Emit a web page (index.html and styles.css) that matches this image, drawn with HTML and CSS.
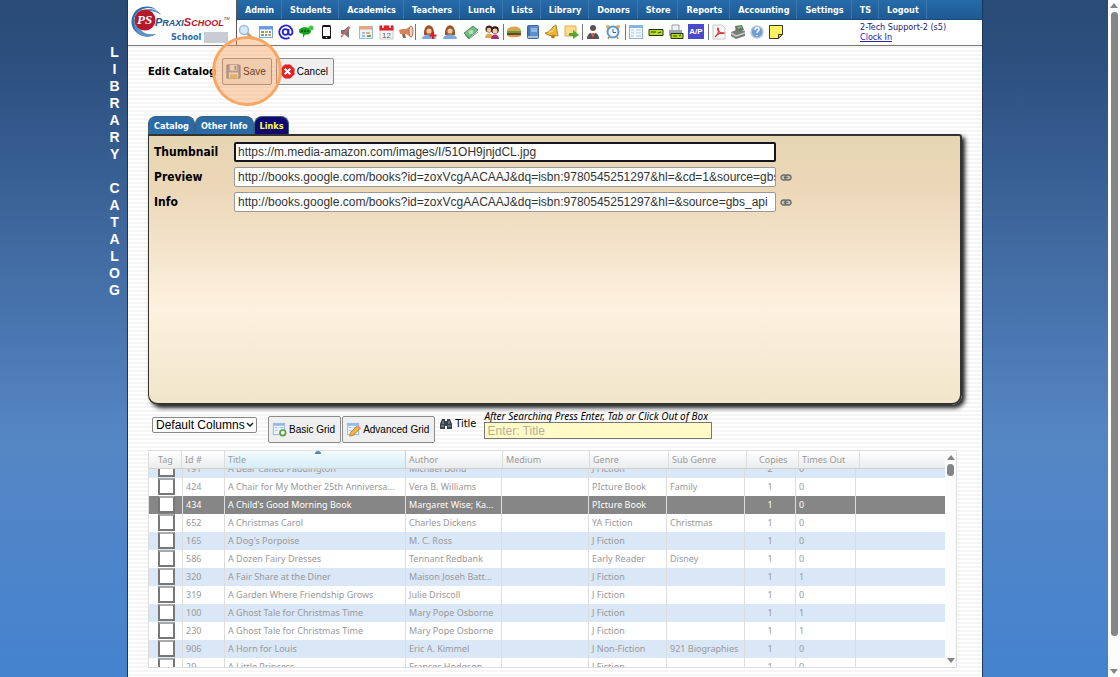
FILE: index.html
```html
<!DOCTYPE html>
<html lang="en">
  <head>
    <meta charset="UTF-8" />
    <meta name="viewport" content="width=device-width, initial-scale=1.0" />
    <title>PraxiSchool - Library Catalog</title>
    <link rel="stylesheet" href="styles.css">
  </head>
  <body>
    <div class="side-title">L
I
B
R
A
R
Y

C
A
T
A
L
O
G</div>

    <div class="page">
      <header class="header">
        <div class="logo">
          <svg class="logo-mark" viewBox="0 0 34 34">
            <path d="M27 5C19-1 7 1 3 10s0 18 10 21c5 1 10 0 13-2-8 2-16 0-20-7S5 7 13 4c5-2 10-1 14 1z" fill="#2a6fae" />
            <path d="M31 10C27 3 16 2 9 8S3 24 9 29c6 4 13 3 17 0-6 1-12 0-16-5S7 12 13 8c6-3 13-2 18 2z" fill="#5b93c6" />
            <circle cx="15" cy="15" r="10.500" fill="#b5172b" />
            <text x="7" y="19" class="mark-ps">PS</text>
          </svg>
          <div class="logo-text">
            <div class="brand"><span class="blue">P<small>RAXI</small></span><span class="red">S<small>CHOOL</small></span><sup>TM</sup></div>
            <div class="school">School <span class="school-name"></span></div>
          </div>
        </div>
        <div class="header-main">
          <nav class="nav">
            <a href="#">Admin</a><a href="#">Students</a><a href="#">Academics</a><a href="#">Teachers</a><a href="#">Lunch</a><a href="#">Lists</a><a href="#">Library</a><a href="#">Donors</a><a href="#">Store</a><a href="#">Reports</a><a href="#">Accounting</a><a href="#">Settings</a><a href="#">TS</a><a href="#">Logout</a>
          </nav>
          <div class="toolbar">
            <div class="tools">
              <a href="#" title="Search"><svg viewBox="0 0 16 16"><path d="M9 9l5 5" stroke="#c9a578" stroke-width="3" stroke-linecap="round" /><circle cx="6" cy="6" r="4.500" fill="#d5e9fb" stroke="#9bbbe0" stroke-width="1.500" /></svg></a>
              <a href="#" title="Schedule"><svg viewBox="0 0 16 16"><rect x="1.500" y="2.500" width="13" height="11" fill="#fff" stroke="#7aa7dc" /><path d="M1 4h14" stroke="#6a9ddb" stroke-width="3" /><path d="M3 8h3M3 11h3" stroke="#6fae58" stroke-width="2" /><path d="M7 8h3M10 11h3" stroke="#e79a4c" stroke-width="2" /><path d="M11 8h2M7 11h2" stroke="#5b97df" stroke-width="2" /></svg></a>
              <a href="#" title="Email"><svg viewBox="0 0 16 16"><g fill="none" stroke="#2424cf" stroke-width="1.800"><circle cx="7.500" cy="8" r="2.800" /><path d="M10.500 5v4.500c0 2 4 2 4-1.500a6.600 6.600 0 1 0-3 5.600" /></g></svg></a>
              <a href="#" title="Text message"><svg viewBox="0 0 16 16"><path d="M1 7c0-5 12-5 12 0 0 3-4 4-6 3.500L5 14v-4C2 9.500 1 9 1 7z" fill="#12a41c" /><circle cx="13" cy="4" r="2.500" fill="#46c14d" /><path d="M3 7h8" stroke="#034b08" stroke-width="1.500" stroke-dasharray="2 1" /></svg></a>
              <a href="#" title="Phone"><svg viewBox="0 0 16 16"><rect x="4" y="1" width="9" height="14" rx="1.500" fill="#151515" /><path d="M5 3h7v9H5z" fill="#fff" /><circle cx="8.500" cy="13.500" r=".8" fill="#fff" /></svg></a>
              <a href="#" title="Mute"><svg viewBox="0 0 16 16"><path d="M3 6h3l5-4v12l-5-4H3z" fill="#777" /><path d="M3 13l9-10" stroke="#dd6565" stroke-width="1.500" /></svg></a>
              <a href="#" title="Planner"><svg viewBox="0 0 16 16"><rect x="1.500" y="2.500" width="13" height="12" fill="#eaf3fc" stroke="#9fb8d6" /><path d="M2 4h12" stroke="#f2a36d" stroke-width="3" /><path d="M4 8h3v2H4zM4 11h3v2H4z" fill="#9bc3ea" /><path d="M8 8h4v2H8z" fill="#f4a560" /><path d="M9 11h4v2H9z" fill="#6da85a" /></svg></a>
              <a href="#" title="Calendar"><svg viewBox="0 0 16 16"><rect x="2" y="2" width="13" height="13" fill="#f2f2f2" stroke="#ccc" /><path d="M1.500 1.500h14v5h-14z" fill="#d9222c" /><path d="M5 0v4M12 0v4" stroke="#fff" stroke-width="1.500" /><text x="4" y="14" class="icon-num">12</text></svg></a>
              <a href="#" title="Announcements"><svg viewBox="0 0 16 16"><path d="M1 6l3-1h4l5-3v11L8 10H2z" fill="#d98655" /><path d="M4 10h3l1 4H5z" fill="#8c6655" /><ellipse cx="13" cy="7.500" rx="2" ry="5.500" fill="#e5d3c8" stroke="#b36b4a" /></svg></a>
            </div>
            <div class="tools people">
              <a href="#" title="Add student"><svg viewBox="0 0 16 16"><path d="M3 11c-1-13 11-13 10 0z" fill="#9b5326" /><circle cx="8" cy="7" r="2.600" fill="#f4c69d" /><path d="M1 15c0-6 14-6 14 0z" fill="#79a9df" /><path d="M12 8v7M8.500 11.500h7" stroke="#e5171c" stroke-width="2" /></svg></a>
              <a href="#" title="Student"><svg viewBox="0 0 16 16"><path d="M3 11c-1-13 11-13 10 0z" fill="#9b5326" /><circle cx="8" cy="7" r="2.600" fill="#f4c69d" /><path d="M1 15c0-6 14-6 14 0z" fill="#79a9df" /></svg></a>
              <a href="#" title="Payments"><svg viewBox="0 0 16 16"><path d="M1 9l9-7 5 4-9 8z" fill="#79b986" stroke="#4d965e" /><ellipse cx="8" cy="8" rx="2.500" ry="2" fill="#b9dfbf" /><path d="M2 11l4 4 9-7" fill="none" stroke="#68a977" /></svg></a>
              <a href="#" title="Families"><svg viewBox="0 0 16 16"><circle cx="5" cy="5" r="3.500" fill="#362a24" /><circle cx="5" cy="6" r="2.300" fill="#f0c29b" /><path d="M1 14c0-6 8-6 8 0z" fill="#d9a94e" /><circle cx="11" cy="6" r="3.800" fill="#2a1b18" /><circle cx="11" cy="7" r="2.500" fill="#f6cba5" /><path d="M7 15c0-6 8-6 8 0z" fill="#a92a72" /></svg></a>
            </div>
            <div class="tools">
              <a href="#" title="Lunch"><svg viewBox="0 0 16 16"><path d="M1 7c0-6 14-6 14 0z" fill="#dda24e" /><path d="M1 8h14" stroke="#58a13b" stroke-width="2" /><path d="M1 10h14" stroke="#71402b" stroke-width="2" /><path d="M1 11h14c0 3-14 3-14 0z" fill="#d99a47" /></svg></a>
              <a href="#" title="Library"><svg viewBox="0 0 16 16"><rect x="2.500" y="1.500" width="11" height="13" rx="1" fill="#5d8fcb" stroke="#3c659c" /><path d="M4 2v10" stroke="#315d94" /><path d="M6 5h6M6 7h6" stroke="#c8def5" /><path d="M3 13h10" stroke="#eee" /></svg></a>
              <a href="#" title="Alerts"><svg viewBox="0 0 16 16"><path d="M1 9c6-1 6-6 11-8l2 11c-3-1-9 1-13-3z" fill="#e9b63a" stroke="#b98119" /><circle cx="9" cy="12.500" r="2" fill="#be7f17" /><path d="M5 8c4 0 5-3 6-5" stroke="#fff1a9" fill="none" /></svg></a>
              <a href="#" title="Send note"><svg viewBox="0 0 16 16"><path d="M2 2h11v10H2z" fill="#fbdc8f" stroke="#e3aa4c" /><path d="M6 9h4V6l6 5-6 4v-3H6z" fill="#55a72f" /></svg></a>
            </div>
            <div class="tools staff">
              <a href="#" title="Staff"><svg viewBox="0 0 16 16"><circle cx="8" cy="4" r="3" fill="#5c5250" /><path d="M2 15c0-9 12-9 12 0z" fill="#505057" /><path d="M6 8h4l-2 6z" fill="#fff" /><path d="M8 9v5" stroke="#d22" stroke-width="1.500" /></svg></a>
              <a href="#" title="Time clock"><svg viewBox="0 0 16 16"><circle cx="3" cy="3" r="2" fill="#e3ad42" /><circle cx="13" cy="3" r="2" fill="#e3ad42" /><circle cx="8" cy="8" r="5.500" fill="#f3f8ff" stroke="#5b96d5" stroke-width="2" /><path d="M8 5v3.500h3" fill="none" stroke="#445a77" /><path d="M4 13l-1 2M12 13l1 2" stroke="#b88429" stroke-width="1.500" /></svg></a>
            </div>
            <div class="tools wide">
              <a href="#" title="Ledger"><svg viewBox="0 0 16 16"><rect x="1.500" y="1.500" width="13" height="13" fill="#f2f8ff" stroke="#8eb5dd" /><path d="M2 3h12" stroke="#83b1e3" stroke-width="2" /><path d="M3 6h3M3 9h3M3 12h3M8 6h5M8 9h5M8 12h5" stroke="#acc8e4" /></svg></a>
              <a href="#" title="Check"><svg viewBox="0 0 16 16"><path d="M1 5.500h14v6H1z" fill="#b4d832" stroke="#26320b" /><path d="M3 8h5M10 9l3-1" stroke="#314706" /></svg></a>
              <a href="#" title="Print checks"><svg viewBox="0 0 16 16"><path d="M4 1h7v6H4z" fill="#eef2f5" stroke="#99a" /><path d="M1 6h13v6H1z" fill="#9da5aa" /><path d="M3 9.500h12v5H3z" fill="#b4d832" stroke="#26320b" /><path d="M5 12h4M11 12l2-1" stroke="#314706" /></svg></a>
              <a href="#" title="Accounts payable" class="ap">A/P</a>
            </div>
            <div class="tools last">
              <a href="#" title="PDF"><svg viewBox="0 0 16 16"><path d="M2 1h9l3 3v11H2z" fill="#f7f7f7" stroke="#c8c8c8" /><path d="M4 13c4-3 4-7 3-9-2 1 3 7 6 5-2-1-7 1-9 4z" fill="none" stroke="#dc3939" stroke-width="1.300" /></svg></a>
              <a href="#" title="Cash register"><svg viewBox="0 0 16 16"><path d="M5 2l7-1 2 5-8 3z" fill="#667064" /><path d="M7 3l4-1 1 2-4 1z" fill="#75bf68" /><path d="M1 8l5-2 9 1v5l-9 3-5-3z" fill="#777d77" /><path d="M1 9l5 3 9-3" fill="none" stroke="#c8cdc8" stroke-width="1.500" /></svg></a>
              <a href="#" title="Help"><svg viewBox="0 0 16 16"><circle cx="8" cy="8" r="6" fill="#6d9fd6" stroke="#b9c9d9" stroke-width="1.500" /><path d="M6 6c0-3 4-3 4-.5C10 7 8 7 8 9M8 11v1" fill="none" stroke="#fff" stroke-width="1.500" /></svg></a>
              <a href="#" title="Notes"><svg viewBox="0 0 16 16"><path d="M1.500 1.500h13v9l-4 4h-9z" fill="#fff064" stroke="#3c3a1f" /><path d="M14.500 10.500h-4v4z" fill="#d8c73b" stroke="#3c3a1f" /></svg></a>
            </div>
            <div class="user">2-Tech Support-2 (s5)<br><a href="#">Clock In</a></div>
          </div>
        </div>
      </header>

      <main class="content">
        <div class="title-row">
          <h1>Edit Catalog</h1>
          <div class="save-wrap">
            <button type="button" class="btn"><svg viewBox="0 0 16 16"><path d="M1 1h13l1 1v13H1z" fill="#8d9cb6" stroke="#62708c" /><path d="M4 1h8v6H4z" fill="#e8edf4" /><path d="M9 2h2v4H9z" fill="#77859b" /><path d="M3 9h10v6H3z" fill="#eee" /><path d="M4 11h8v4H4z" fill="#c9c777" /></svg>Save</button>
            <span class="click-mark"></span>
          </div>
          <button type="button" class="btn"><svg viewBox="0 0 16 16"><path d="M5 1h6l4 4v6l-4 4H5l-4-4V5z" fill="#e32227" stroke="#d6292c" /><path d="M5 5l6 6M11 5l-6 6" stroke="#fff" stroke-width="2.200" /></svg>Cancel</button>
        </div>

        <div class="tabs">
          <button type="button">Catalog</button>
          <button type="button">Other Info</button>
          <button type="button" class="active">Links</button>
        </div>
        <form class="panel">
          <div class="field">
            <label for="thumbnail">Thumbnail</label>
            <input type="text" id="thumbnail" class="focused" value="https://m.media-amazon.com/images/I/51OH9jnjdCL.jpg">
          </div>
          <div class="field">
            <label for="preview">Preview</label>
            <input type="text" id="preview" value="http://books.google.com/books?id=zoxVcgAACAAJ&amp;dq=isbn:9780545251297&amp;hl=&amp;cd=1&amp;source=gbs_api">
            <a href="#" title="Open preview"><svg viewBox="0 0 12 7"><g fill="#c8c4b6" stroke="#696a69" stroke-width="1.300"><rect x="1" y="1" width="6" height="5" rx="2.500" /><rect x="5" y="1" width="6" height="5" rx="2.500" /><path d="M4 3.500h4" /></g></svg></a>
          </div>
          <div class="field">
            <label for="info">Info</label>
            <input type="text" id="info" value="http://books.google.com/books?id=zoxVcgAACAAJ&amp;dq=isbn:9780545251297&amp;hl=&amp;source=gbs_api">
            <a href="#" title="Open info"><svg viewBox="0 0 12 7"><g fill="#c8c4b6" stroke="#696a69" stroke-width="1.300"><rect x="1" y="1" width="6" height="5" rx="2.500" /><rect x="5" y="1" width="6" height="5" rx="2.500" /><path d="M4 3.500h4" /></g></svg></a>
          </div>
        </form>

        <div class="controls">
          <div class="select-wrap">
            <select aria-label="Columns"><option>Default Columns</option></select>
            <svg viewBox="0 0 8 5"><path d="M1 1l3 3 3-3" fill="none" stroke="#222" stroke-width="1.500" /></svg>
          </div>
          <button type="button" class="btn"><svg viewBox="0 0 16 16"><rect x="1.500" y="1.500" width="12" height="12" fill="#eff6ff" stroke="#90b5df" /><path d="M2 3h11" stroke="#8fb9e9" stroke-width="2" /><path d="M3 6h3M3 9h3M8 6h4M8 9h4" stroke="#9bbbe0" /><circle cx="11.500" cy="11.500" r="3" fill="#f1fce9" stroke="#5c9f3f" stroke-width="1.800" /></svg>Basic Grid</button>
          <button type="button" class="btn"><svg viewBox="0 0 16 16"><rect x="1.500" y="1.500" width="12" height="12" fill="#eff6ff" stroke="#90b5df" /><path d="M2 3h11" stroke="#8fb9e9" stroke-width="2" /><path d="M3 6h3M3 9h3M8 6h4" stroke="#9bbbe0" /><path d="M4 15l1-4 7-7 3 3-7 7z" fill="#efb64a" stroke="#bd7d2c" /><path d="M12 4l3 3" stroke="#e88" stroke-width="2" /></svg>Advanced Grid</button>
          <label class="search-label" for="search"><svg viewBox="0 0 12 12"><path d="M2 1h3v2h2V1h3l2 5v5H7V8H5v3H0V6z" fill="#39434c" /><path d="M1 8h3M8 8h3M3 3v3M9 3v3" stroke="#94a6b3" /></svg>Title</label>
          <div class="search">
            <em>After Searching Press Enter, Tab or Click Out of Box</em>
            <input type="text" id="search" placeholder="Enter: Title">
          </div>
        </div>

        <div class="grid">
          <table>
            <thead>
              <tr><th>Tag</th><th>Id #</th><th class="sorted">Title</th><th>Author</th><th>Medium</th><th>Genre</th><th>Sub Genre</th><th>Copies</th><th>Times Out</th><th></th></tr>
            </thead>
            <tbody>
              <tr><td><input type="checkbox" aria-label="Tag 191"></td><td>191</td><td>A Bear Called Paddington</td><td>Michael Bond</td><td></td><td>J Fiction</td><td></td><td>2</td><td>0</td><td></td></tr>
              <tr><td><input type="checkbox" aria-label="Tag 424"></td><td>424</td><td>A Chair for My Mother 25th Anniversa...</td><td>Vera B. Williams</td><td></td><td>PIcture Book</td><td>Family</td><td>1</td><td>0</td><td></td></tr>
              <tr class="selected"><td><input type="checkbox" aria-label="Tag 434"></td><td>434</td><td>A Child's Good Morning Book</td><td>Margaret Wise; Ka...</td><td></td><td>PIcture Book</td><td></td><td>1</td><td>0</td><td></td></tr>
              <tr><td><input type="checkbox" aria-label="Tag 652"></td><td>652</td><td>A Christmas Carol</td><td>Charles Dickens</td><td></td><td>YA Fiction</td><td>Christmas</td><td>1</td><td>0</td><td></td></tr>
              <tr><td><input type="checkbox" aria-label="Tag 165"></td><td>165</td><td>A Dog's Porpoise</td><td>M. C. Ross</td><td></td><td>J Fiction</td><td></td><td>1</td><td>0</td><td></td></tr>
              <tr><td><input type="checkbox" aria-label="Tag 586"></td><td>586</td><td>A Dozen Fairy Dresses</td><td>Tennant Redbank</td><td></td><td>Early Reader</td><td>Disney</td><td>1</td><td>0</td><td></td></tr>
              <tr><td><input type="checkbox" aria-label="Tag 320"></td><td>320</td><td>A Fair Share at the Diner</td><td>Maison Joseh Batt...</td><td></td><td>J Fiction</td><td></td><td>1</td><td>1</td><td></td></tr>
              <tr><td><input type="checkbox" aria-label="Tag 319"></td><td>319</td><td>A Garden Where Friendship Grows</td><td>Julie Driscoll</td><td></td><td>J Fiction</td><td></td><td>1</td><td>0</td><td></td></tr>
              <tr><td><input type="checkbox" aria-label="Tag 100"></td><td>100</td><td>A Ghost Tale for Christmas Time</td><td>Mary Pope Osborne</td><td></td><td>J Fiction</td><td></td><td>1</td><td>1</td><td></td></tr>
              <tr><td><input type="checkbox" aria-label="Tag 230"></td><td>230</td><td>A Ghost Tale for Christmas Time</td><td>Mary Pope Osborne</td><td></td><td>J Fiction</td><td></td><td>1</td><td>1</td><td></td></tr>
              <tr><td><input type="checkbox" aria-label="Tag 906"></td><td>906</td><td>A Horn for Louis</td><td>Eric A. Kimmel</td><td></td><td>J Non-Fiction</td><td>921 Biographies</td><td>1</td><td>0</td><td></td></tr>
              <tr><td><input type="checkbox" aria-label="Tag 29"></td><td>29</td><td>A Little Princess</td><td>Frances Hodgson</td><td></td><td>J Fiction</td><td></td><td>1</td><td>0</td><td></td></tr>
            </tbody>
          </table>
          <div class="scrollbar grid-scroll"><i class="up"></i><i class="thumb"></i><i class="down"></i></div>
        </div>
      </main>
    </div>

    <div class="scrollbar page-scroll"><i class="up"></i><i class="thumb"></i><i class="down"></i></div>
  </body>
</html>
```
FILE: styles.css
```css
* {
  box-sizing: border-box;
}

body {
  margin: 0;
  height: 100vh;
  overflow: hidden;
  display: flex;
  background: linear-gradient(#284a74, #2d5080 10%, #5586c4 65%, #4583cf);
  font-family: "DejaVu Sans Condensed", "Noto Sans", sans-serif;
  font-size: 9px;
  color: #000;
}

svg {
  display: block;
}

.side-title {
  width: 127px;
  flex-shrink: 0;
  padding: 44px 7px 0 0;
  white-space: pre;
  font: bold 14px/17px "Liberation Sans", sans-serif;
  color: #fff;
  display: flex;
  justify-content: flex-end;
  text-align: center;
}

.page {
  flex: 1;
  min-width: 0;
  margin-right: 125px;
  border: solid #16365c;
  border-width: 0 1px;
  background: repeating-linear-gradient(#fff 0 2px, #f5f5f5 2px 4px);
}

/* header */
.header {
  display: flex;
  height: 46px;
  background: #fff;
  border-bottom: 1px solid #777;
}

.logo {
  width: 109px;
  display: flex;
  border-right: 1px solid #555;
  padding: 5px 0 0 2px;
}

.logo-mark {
  width: 34px;
  height: 34px;
  flex-shrink: 0;
}

.mark-ps {
  font: italic bold 13px "Liberation Serif", serif;
  fill: #fff;
}

.logo-text {
  margin-left: -9px;
  padding-top: 10px;
  z-index: 1;
}

.brand {
  font: italic bold 11px/14px "Liberation Sans", sans-serif;
  white-space: nowrap;
}

.brand small {
  font-size: 9px;
}

.brand sup {
  font-size: 4px;
  line-height: 0;
  color: #777;
  vertical-align: 6px;
}

.blue {
  color: #24568f;
}

.red {
  color: #b5172b;
}

.school {
  display: flex;
  align-items: center;
  gap: 3px;
  padding-left: 16px;
  font-weight: bold;
  line-height: 14px;
  color: #2a6cab;
}

.school-name {
  width: 24px;
  height: 11px;
  background: #c8ccd4;
}

.header-main {
  flex: 1;
  min-width: 0;
}

.nav {
  height: 20px;
  display: flex;
  background: linear-gradient(#276ba9, #1d5a93);
  border-bottom: 1px solid #184a7a;
}

.nav a {
  padding: 0 7px 0 8px;
  border-right: 1px solid #3b78ae;
  font-weight: bold;
  line-height: 20px;
  color: #fff;
  text-decoration: none;
}

.toolbar {
  display: flex;
  align-items: center;
  height: 24px;
  padding-left: 1px;
}

.tools {
  display: flex;
  gap: 3px;
  padding: 0 3px 0 2px;
}

.tools + .tools {
  border-left: 1px solid #777;
}

.tools:first-child {
  gap: 4px;
  padding: 0 1px 0 0;
}

.tools svg {
  width: 16px;
  height: 16px;
}

.tools.people {
  gap: 5px;
  padding: 0 3px 0 5px;
}

.tools.staff {
  gap: 4px;
  padding-right: 4px;
}

.tools.wide {
  gap: 4px;
  padding-right: 4px;
}

.icon-num {
  font: 8px "Liberation Sans", sans-serif;
  fill: #666;
}

.ap {
  width: 16px;
  height: 15px;
  background: #4a4ac8;
  font: bold 8px/15px "Liberation Sans", sans-serif;
  color: #fff;
  text-align: center;
  text-decoration: none;
}

.user {
  margin-left: auto;
  width: 122px;
  line-height: 10px;
  color: #1c1c80;
}

.user a {
  color: #2424a8;
}

/* content */
.content {
  padding: 11px 20px 0;
}

.title-row {
  display: flex;
  align-items: center;
  gap: 4px;
  height: 28px;
}

h1 {
  margin: 0;
  min-width: 70px;
  font-size: 11px;
  white-space: nowrap;
}

.btn {
  display: flex;
  align-items: center;
  gap: 2px;
  height: 27px;
  padding: 0 5px 0 3px;
  border: 1px solid #8c8c8c;
  border-radius: 2px;
  background: #efefef;
  font: 10px "Liberation Sans", sans-serif;
  color: #000;
  white-space: nowrap;
}

.btn svg {
  width: 15px;
  height: 15px;
}

.save-wrap {
  position: relative;
}

.click-mark {
  position: absolute;
  top: 50%;
  left: 50%;
  width: 70px;
  height: 70px;
  margin: -35px;
  border: 3px solid #f7a763;
  border-radius: 50%;
  background: rgba(247, 153, 77, 0.4);
  pointer-events: none;
}

.tabs {
  display: flex;
  margin-top: 31px;
}

.tabs button {
  height: 18px;
  padding: 0 5px;
  border: 1px solid #3d5e7c;
  border-bottom: 0;
  border-radius: 8px 8px 0 0;
  background: #2a6ba6;
  font: bold 9px "DejaVu Sans Condensed", "Noto Sans", sans-serif;
  color: #fff;
}

.tabs .active {
  background: #100a70;
  color: #ffff4d;
}

.panel {
  display: flex;
  flex-direction: column;
  gap: 5px;
  min-height: 271px;
  padding: 6px 5px;
  border: 2px solid #333;
  border-left-width: 1px;
  border-radius: 0 3px 10px 10px;
  box-shadow: 3px 3px 4px #222;
  background: linear-gradient(#e5d6b3, #ecd7b8 20%, #fdf1df 65%, #f1e5ca);
}

.field {
  display: flex;
  align-items: center;
}

.field label {
  width: 80px;
  font-size: 12px;
  font-weight: bold;
}

.field input {
  width: 542px;
  height: 20px;
  padding: 0 0 0 3px;
  border: 1px solid #999;
  border-radius: 2px;
  background: #fff;
  font: 12px "Liberation Sans", sans-serif;
  color: #333;
}

.field .focused {
  padding-left: 2px;
  border: 2px solid #15151f;
}

.field svg {
  width: 12px;
  height: 7px;
  margin-left: 4px;
}

.controls {
  display: flex;
  align-items: flex-start;
  gap: 1px;
  padding: 5px 0 0 4px;
  height: 45px;
}

.select-wrap {
  position: relative;
  margin: 7px 10px 0 0;
}

.select-wrap svg {
  position: absolute;
  top: 5px;
  right: 3px;
  width: 8px;
  height: 5px;
  pointer-events: none;
}

.controls select {
  appearance: none;
  display: block;
  width: 105px;
  height: 16px;
  padding: 0 0 0 3px;
  border: 1px solid #888;
  border-radius: 2px;
  background: #fff;
  font: 12px "Liberation Sans", sans-serif;
}

.controls .btn {
  margin-top: 6px;
}

.search-label {
  display: flex;
  align-items: center;
  gap: 3px;
  padding: 7px 7px 0 4px;
  font-size: 11px;
}

.search-label svg {
  width: 12px;
  height: 12px;
}

.search {
  display: flex;
  flex-direction: column;
}

.search em {
  font-family: "Noto Sans", sans-serif;
  font-size: 10px;
  line-height: 12px;
}

.search input {
  width: 228px;
  height: 17px;
  padding: 0 2px;
  border: 1px solid #777;
  background: #fffac6;
  font: 12px "Liberation Sans", sans-serif;
}

.search input::placeholder {
  color: #b5b29a;
}

/* results grid */
.grid {
  display: flex;
  margin-right: 5px;
  border: 1px solid #ddd;
  background: #fff;
  font-family: "Noto Sans", sans-serif;
  color: #999;
}

table,
thead,
tbody {
  display: block;
  width: 100%;
}

thead tr,
tbody tr {
  display: grid;
  grid-template-columns: 34px 42px 181px 96px 87px 78px 78px 51px 60px 1fr;
}

thead tr {
  grid-template-columns: 33px 43px 181px 97px 87px 79px 78px 52px 61px 1fr;
  height: 18px;
  background: linear-gradient(#fff, #eaeced);
  border-bottom: 1px solid #d0d0d0;
}

th,
td {
  padding: 0 0 0 3px;
  border-right: 1px solid #ddd;
  font-size: 9px;
  line-height: 17px;
  text-align: left;
  white-space: nowrap;
  overflow: hidden;
}

th {
  font-weight: normal;
}

th:first-child {
  padding-left: 9px;
}

th:nth-child(8) {
  padding-left: 12px;
}

th:last-child,
td:last-child {
  border-right: 0;
}

.sorted {
  background: linear-gradient(#f5fcff, #d5edf6);
  border-color: #a9dcf0;
  position: relative;
}

.sorted::after {
  content: "";
  position: absolute;
  top: 0;
  left: 50%;
  width: 6px;
  height: 3px;
  border-radius: 3px 3px 0 0;
  background: #5788a9;
}

tbody {
  height: 198px;
  overflow: hidden;
}

tbody tr {
  height: 18px;
}

tbody tr:first-child {
  margin-top: -9px;
}

tbody tr:nth-child(odd) {
  background: #d9e7f6;
}

tbody tr.selected {
  background: #868686;
  color: #fff;
}

td:first-child {
  padding-left: 9px;
}

td:nth-child(8) {
  padding: 0;
  text-align: center;
}

td input {
  appearance: none;
  display: block;
  width: 17px;
  height: 17px;
  margin: 0;
  border: 2px solid #777;
  border-top-color: #aaa;
  background: #fff;
}

/* scrollbars */
.scrollbar {
  display: flex;
  flex-direction: column;
  align-items: center;
  flex-shrink: 0;
  width: 11px;
  padding: 4px 0;
  background: #fcfcfc;
}

.scrollbar i {
  border: 4px solid transparent;
}

.scrollbar .up {
  border-top: 0;
  border-bottom: 5px solid #858585;
}

.scrollbar .down {
  border-bottom: 0;
  border-top: 5px solid #858585;
  margin-top: auto;
}

.scrollbar .thumb {
  width: 7px;
  height: 12px;
  margin-top: 4px;
  border: 0;
  border-radius: 4px;
  background: #858585;
}

.page-scroll {
  width: 12px;
  padding: 3px 0;
}

.page-scroll .thumb {
  height: 93%;
}
```
